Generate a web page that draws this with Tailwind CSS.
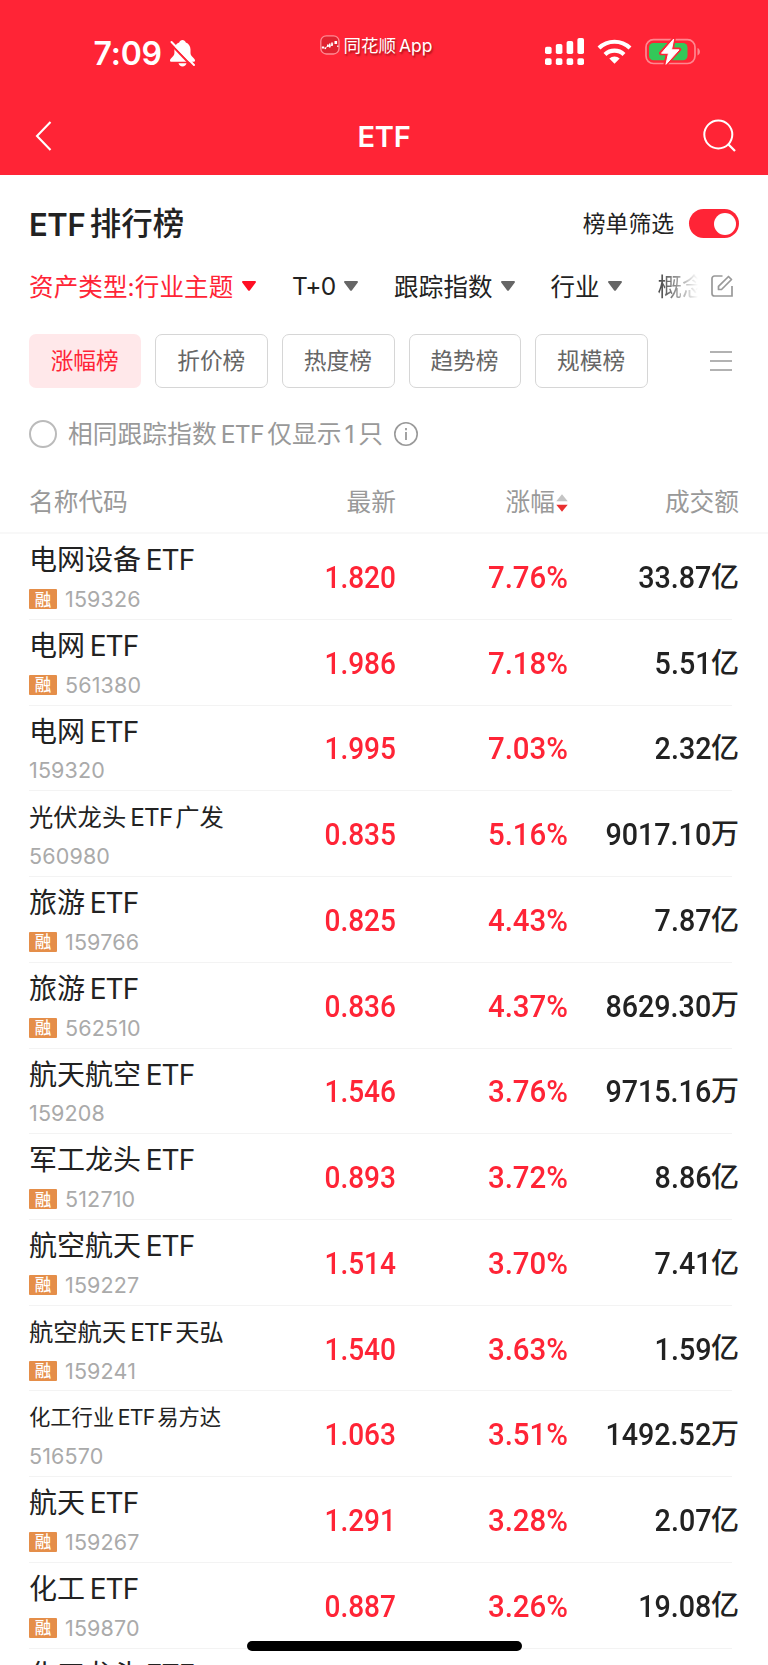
<!DOCTYPE html>
<html lang="zh-CN">
<head>
<meta charset="utf-8">
<title>ETF排行榜</title>
<script src="https://cdn.jsdelivr.net/npm/@tailwindcss/browser@4"></script>
</head>
<body class="bg-white">
<div class="relative flex h-[1665px] w-[768px] flex-col overflow-hidden bg-white font-['Inter','Noto_Sans_CJK_SC',sans-serif] leading-none whitespace-nowrap text-[#222]">

  <header class="flex h-[175px] shrink-0 flex-col bg-[#ff2436] text-white">
    <div class="flex h-[98px] items-start pt-[29px]">
      <div class="ml-[93.500px] flex h-[48px] w-[226.500px] items-center">
        <span class="w-[75px] pt-px text-[32px] font-semibold tracking-[-0.2px]">7:09</span>
        <svg class="h-[30px] w-[28px]" viewBox="0 0 28 30" fill="none">
          <path d="M13.5 2c-1.500 0-2.900 1-3.300 2.400-3 1-4.800 3.800-4.800 7.200v3.400c0 1.700-.9 2.800-2.300 4.200C1.700 20.600 1 21.500 1 22.500c0 .9.600 1.300 1.500 1.300h22c.900 0 1.500-.4 1.500-1.300 0-1-.8-1.900-2.200-3.300-1.400-1.400-2.300-2.500-2.300-4.200v-3.400c0-3.400-1.800-6.200-4.700-7.200C16.300 3 15 2 13.500 2z" fill="#fff"/>
          <path d="M9.500 25.300h8c-.4 2-2 3.200-4 3.200s-3.600-1.200-4-3.200z" fill="#fff"/>
          <path d="M1.200 5.400 23 28.200" stroke="#ff2436" stroke-width="2.200"/>
          <path d="M2.500 4 25 27" stroke="#fff" stroke-width="2" stroke-linecap="round"/>
        </svg>
      </div>
      <div class="flex h-[32px] w-[225px] items-center">
        <svg class="h-[20px] w-[20px]" viewBox="0 0 20 20" fill="none">
          <rect x=".8" y=".8" width="18.200" height="18.200" rx="5.500" fill="#e02230" stroke="#ff8a93" stroke-width="1.300"/>
          <g fill="#fff"><rect x="1.800" y="11.500" width="2.400" height="2"/><rect x="4.500" y="12.500" width="1.600" height="1.600"/><rect x="7" y="9.500" width="1.700" height="2.500"/><rect x="9" y="8.500" width="1.500" height="4"/><rect x="11.200" y="7.500" width="1.600" height="3.500"/><rect x="14.500" y="6" width="2.600" height="3"/><rect x="17.200" y="10.500" width="1.200" height="1.500"/></g>
          <path d="m5.500 13 2.500-2.500 1.700 1 3.500-2.500" stroke="#fff" stroke-width=".8"/>
        </svg>
        <span class="ml-[3.500px] pt-[1px] text-[17.500px] [text-shadow:1px_2px_2px_rgba(90,0,0,.55)]">同花顺<span class="ml-[3px] text-[17.500px]">App</span></span>
      </div>
      <svg class="mt-[8px] h-[30px] w-[156px]" viewBox="0 0 156 30" fill="none">
        <g fill="#fff">
          <rect x="0" y="9.800" width="6.600" height="7.200" rx="1.800"/><rect x="10.800" y="7" width="6.600" height="10" rx="1.800"/><rect x="21.600" y="4" width="6.600" height="13" rx="1.800"/><rect x="32.400" y="1" width="6.600" height="16" rx="1.800"/>
          <rect x="0" y="21.200" width="6.600" height="6.800" rx="1.800"/><rect x="10.800" y="21.200" width="6.600" height="6.800" rx="1.800"/><rect x="21.600" y="21.200" width="6.600" height="6.800" rx="1.800"/><rect x="32.400" y="21.200" width="6.600" height="6.800" rx="1.800"/>
          <path d="M69.500 26.700 64.300 21.500a7.500 7.500 0 0 1 10.400 0z"/>
        </g>
        <path d="M60 17.500a13.700 13.700 0 0 1 19 0" stroke="#fff" stroke-width="4.200"/>
        <path d="M54 11a22.300 22.300 0 0 1 31 0" stroke="#fff" stroke-width="4.200"/>
        <rect x="101" y="2.700" width="49" height="23.800" rx="7.500" stroke="#ff8790" stroke-width="1.700"/>
        <path d="M152.500 11v7.500c1.500-.6 2.400-2 2.400-3.700s-.9-3.200-2.400-3.800z" fill="#ff8790"/>
        <rect x="104" y="6" width="38.500" height="17.200" rx="4.500" fill="#34c759"/>
        <path d="M128.700 2 116 16.200h7L120.500 27.300 134.300 12.500h-7.500z" fill="#fff" stroke="#ff2436" stroke-width="4" stroke-linejoin="round"/>
        <path d="M128.700 2 116.500 16.200h7L121 27.300 134 12.800h-7.500z" fill="#fff" stroke="#fff" stroke-width="1" stroke-linejoin="round"/>
      </svg>
    </div>
    <div class="flex h-[77px] items-start justify-between pt-[17px] pr-[31px] pl-[34px]">
      <svg class="mt-[5px] h-[32px] w-[40px]" viewBox="0 0 40 32" fill="none"><path d="M16.500 2 3 16l13.500 14" stroke="#fff" stroke-width="2.100"/></svg>
      <span class="mt-[7px] mr-[9px] text-[29px] font-semibold tracking-[-0.200px]">ETF</span>
      <svg class="mt-[4px] h-[34px] w-[34px]" viewBox="0 0 34 34" fill="none" stroke="#fff" stroke-width="2"><circle cx="15.300" cy="15.500" r="14"/><path d="m25 25 7 7" stroke-width="2.300"/></svg>
    </div>
  </header>

  <section class="flex h-[73px] shrink-0 items-center justify-between pr-[29px] pl-[29px] pt-[24px]">
    <h1 class="flex items-center pt-[1px] text-[31.500px] font-medium"><span class="mr-[4.500px] text-[31px] font-semibold tracking-[-0.4px]">ETF</span>排行榜</h1>
    <div class="flex items-center">
      <span class="mr-[15px] pt-[1px] text-[22.800px]">榜单筛选</span>
      <span class="flex h-[29px] w-[50px] items-center justify-end rounded-full bg-[#ff2436] pr-[3px]"><span class="h-[22px] w-[22px] rounded-full bg-white"></span></span>
    </div>
  </section>

  <section class="flex h-[76px] shrink-0 items-center pl-[29px] text-[24.500px]">
    <span class="w-[213px] pt-[2px] tracking-[0.150px] text-[#ff2436]">资产类型:行业主题</span>
    <svg class="h-[10px] w-[14px]" viewBox="0 0 14 10"><path d="M1.200 0h11.600c1 0 1.500 1 .8 1.800L8 9.300c-.5.700-1.500.7-2 0L.4 1.800C-.3 1 .2 0 1.200 0z" fill="#ff0f24"/></svg>
    <span class="ml-[36px] w-[52px] pt-[1px] tracking-[-0.700px]">T+0</span>
    <svg class="h-[10px] w-[14px]" viewBox="0 0 14 10"><path d="M1.200 0h11.600c1 0 1.500 1 .8 1.800L8 9.300c-.5.700-1.500.7-2 0L.4 1.800C-.3 1 .2 0 1.200 0z" fill="#666"/></svg>
    <span class="ml-[36px] w-[106.500px] pt-[2px] tracking-[0.200px]">跟踪指数</span>
    <svg class="h-[10px] w-[14px]" viewBox="0 0 14 10"><path d="M1.200 0h11.600c1 0 1.500 1 .8 1.800L8 9.300c-.5.700-1.500.7-2 0L.4 1.800C-.3 1 .2 0 1.200 0z" fill="#666"/></svg>
    <span class="ml-[36px] w-[57.500px] pt-[2px]">行业</span>
    <svg class="h-[10px] w-[14px]" viewBox="0 0 14 10"><path d="M1.200 0h11.600c1 0 1.500 1 .8 1.800L8 9.300c-.5.700-1.500.7-2 0L.4 1.800C-.3 1 .2 0 1.200 0z" fill="#666"/></svg>
    <span class="ml-[35.500px] w-[40px] overflow-hidden bg-linear-to-r from-[#444] to-white bg-clip-text pt-[6px] pb-1 text-transparent">概念</span>
    <svg class="ml-[12px] h-[24px] w-[24px]" viewBox="0 0 24 24" fill="none" stroke="#999" stroke-width="1.700"><path d="M12.500 2H4.500A2.500 2.500 0 0 0 2 4.500v15A2.500 2.500 0 0 0 4.500 22H22V12"/><path d="M8.500 15.500v-3.200L18.500 2.500l3 3-10 10z" stroke-linejoin="round"/></svg>
  </section>

  <section class="flex h-[74px] shrink-0 items-start gap-[14px] pt-[10px] pl-[28.900px] text-[22.700px] text-[#666]">
    <span class="flex h-[54px] w-[112.600px] items-center justify-center rounded-[7px] bg-[#ffe8ea] pt-[1px] pr-[1px] text-[#ff2436]">涨幅榜</span>
    <span class="flex h-[54px] w-[112.600px] items-center justify-center rounded-[7px] border border-[#d6d6d6] pt-[1px] pr-[1px]">折价榜</span>
    <span class="flex h-[54px] w-[112.600px] items-center justify-center rounded-[7px] border border-[#d6d6d6] pt-[1px] pr-[1px]">热度榜</span>
    <span class="flex h-[54px] w-[112.600px] items-center justify-center rounded-[7px] border border-[#d6d6d6] pt-[1px] pr-[1px]">趋势榜</span>
    <span class="flex h-[54px] w-[112.600px] items-center justify-center rounded-[7px] border border-[#d6d6d6] pt-[1px] pr-[1px]">规模榜</span>
    <svg class="mt-[16px] ml-[48px] h-[22px] w-[22px]" viewBox="0 0 22 22" stroke="#999" stroke-width="1.600"><path d="M0 2h22M0 11h22M0 20h22"/></svg>
  </section>

  <section class="flex h-[72px] shrink-0 items-center pl-[29px] text-[24.700px] text-[#999]">
    <span class="h-[28px] w-[28px] rounded-full border-2 border-[#bbb]"></span>
    <span class="ml-[11px] pt-[1px] tracking-[0.100px]">相同跟踪指数<span class="mr-[3.500px] ml-[4px] tracking-[-0.800px]">ETF</span>仅显示<span class="mr-[3.500px] ml-[3px]">1</span>只</span>
    <svg class="ml-[11px] h-[24px] w-[24px]" viewBox="0 0 24 24" fill="none" stroke="#999" stroke-width="1.600"><circle cx="12" cy="12" r="11.200"/><path d="M12 10v8M12 6v2.200" stroke-width="1.800"/></svg>
  </section>

  <section class="flex h-[64.300px] shrink-0 items-center border-b-2 border-[#f8f8f8] pt-[3px] pr-[29px] pl-[29px] text-[24.700px] text-[#999]">
    <span class="w-[200px]">名称代码</span>
    <span class="w-[167px] text-right">最新</span>
    <span class="w-[159px] text-right">涨幅</span>
    <svg class="ml-[1px] h-[18px] w-[12px]" viewBox="0 0 12 18"><path d="M.3 7.300 6 .3l5.700 7z" fill="#c4c4c4"/><path d="M.3 10.700h11.400L6 17.700z" fill="#e93030"/></svg>
    <span class="grow text-right">成交额</span>
  </section>

  <main id="rows" class="flex flex-col"></main>

  <div class="absolute top-[1641px] left-[246.500px] h-[9.500px] w-[275px] rounded-full bg-black"></div>
</div>

<script>
const rows = [
  ['电网设备','','159326',1,'1.820','7.76%','33.87','亿','text-[28px]'],
  ['电网','','561380',1,'1.986','7.18%','5.51','亿','text-[28px]'],
  ['电网','','159320',0,'1.995','7.03%','2.32','亿','text-[28px]'],
  ['光伏龙头','广发','560980',0,'0.835','5.16%','9017.10','万','text-[24.300px]'],
  ['旅游','','159766',1,'0.825','4.43%','7.87','亿','text-[28px]'],
  ['旅游','','562510',1,'0.836','4.37%','8629.30','万','text-[28px]'],
  ['航天航空','','159208',0,'1.546','3.76%','9715.16','万','text-[28px]'],
  ['军工龙头','','512710',1,'0.893','3.72%','8.86','亿','text-[28px]'],
  ['航空航天','','159227',1,'1.514','3.70%','7.41','亿','text-[28px]'],
  ['航空航天','天弘','159241',1,'1.540','3.63%','1.59','亿','text-[24.300px]'],
  ['化工行业','易方达','516570',0,'1.063','3.51%','1492.52','万','text-[21.300px]'],
  ['航天','','159267',1,'1.291','3.28%','2.07','亿','text-[28px]'],
  ['化工','','159870',1,'0.887','3.26%','19.08','亿','text-[28px]'],
  ['化工龙头','','',0,'','','','','text-[28px]'],
];
document.getElementById('rows').innerHTML = rows.map(([a, b, code, tag, price, pct, vol, unit, size]) => `
  <div class="flex h-[85.730px] shrink-0 pr-[36px] pl-[29px]">
    <div class="flex w-full border-b border-[#f3f3f3]">
      <div class="flex w-[240px] flex-col">
        <div class="flex h-[52px] items-center ${size}">${a}<span class="mr-[0.120em] ml-[0.170em] tracking-[-0.035em]">ETF</span>${b}</div>
        <div class="flex h-[26px] items-center text-[21.500px] tracking-[0.150px] text-[#aaa]">
          ${tag ? '<span class="mr-[8px] flex h-[20px] w-[28px] items-center justify-center rounded-[1px] bg-[#e58e49] pt-px text-[16.500px] font-medium text-white">融</span>' : ''}<span class="pt-px">${code}</span>
        </div>
      </div>
      <div class="flex h-[86px] grow items-center pt-[1px] font-['Roboto','Noto_Sans_CJK_SC',sans-serif] text-[31.500px] font-medium">
        <span class="w-[127px] origin-right scale-x-[0.890] text-right text-[#ff2436]">${price}</span>
        <span class="w-[172px] origin-right scale-x-[0.935] text-right text-[#ff2436]">${pct}</span>
        <span class="mr-[-7px] flex grow items-center justify-end"><span class="origin-right scale-x-[0.910]">${vol}</span><span class="text-[28px]">${unit}</span></span>
      </div>
    </div>
  </div>`).join('');
</script>
</body>
</html>
